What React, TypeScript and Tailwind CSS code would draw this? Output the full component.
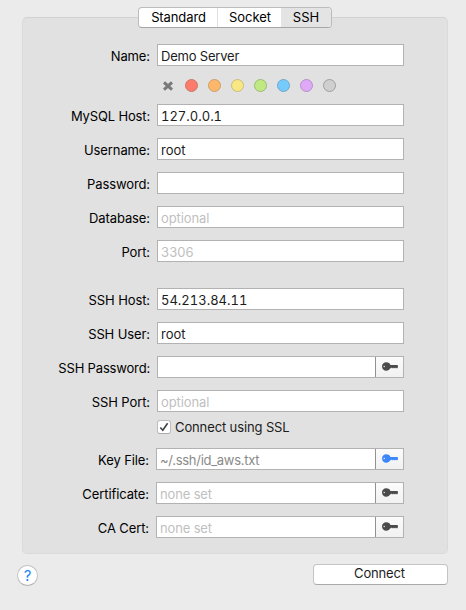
import React from "react";

const swatches = [
  "bg-[#fc7b6b] border-[#cf7367]",
  "bg-[#fdb76b] border-[#cf9d69]",
  "bg-[#f9e784] border-[#c9be7b]",
  "bg-[#c0e984] border-[#9bbb73]",
  "bg-[#76cbfd] border-[#6fa8cb]",
  "bg-[#e0a9f7] border-[#b58fc6]",
  "bg-[#cfcfcf] border-[#9f9f9f]",
];

function KeyIcon({ color }: { color: string }) {
  return (
    <svg width="16" height="9" viewBox="0 0 16 9" fill={color} className="mb-px shrink-0">
      <path
        fillRule="evenodd"
        d="M4.3 .3C6.4 .3 8 1.4 8.4 2.9H15.3L16 3.7V4.6L15.5 6.2H14.4L14 5.4L13.4 6.3H12.4L11.9 5.4L11.3 6.3H10.3L9.8 5.5L9.2 6.3H8.2C7.5 7.8 6.2 8.8 4.3 8.8C1.8 8.8 0 7 0 4.5C0 2 1.8 .3 4.3 .3ZM2.2 3.8A.7 .7 0 1 0 2.2 5.2A.7 .7 0 1 0 2.2 3.8Z"
      />
    </svg>
  );
}

type RowProps = {
  label: string;
  labelSpacing?: string;
  value?: string;
  spacing?: string;
  tone?: string;
  keyColor?: string;
  wide?: boolean;
};

function Row({
  label,
  labelSpacing = "tracking-[-0.1px]",
  value,
  spacing = "",
  tone = "text-[#1c1c1c]",
  keyColor,
  wide,
}: RowProps) {
  return (
    <div className="flex h-[22px] justify-end pr-[43px]">
      <label className={`pr-[7px] pt-px leading-[22px] text-black whitespace-nowrap ${labelSpacing}`}>{label}</label>
      <div className={`flex h-[22px] shrink-0 border border-[#b2b2b2] bg-white ${wide ? "w-[248px]" : "w-[247px]"}`}>
        <span className={`grow pl-[3px] leading-[23px] whitespace-nowrap ${tone} ${spacing}`}>{value}</span>
        {keyColor && (
          <button className="flex w-[28px] items-center justify-center border-l border-[#929292] bg-gradient-to-b from-[#fbfbfb] to-[#f1f1f1]">
            <KeyIcon color={keyColor} />
          </button>
        )}
      </div>
    </div>
  );
}

export default function App() {
  const hint = "text-[#bfbfbf]";
  return (
    <main className="h-[610px] w-[466px] overflow-hidden bg-[#ebebeb] pt-[7px] font-['Inter','Liberation_Sans',sans-serif] text-[13px]">
      <nav className="relative z-10 ml-[138px] flex h-[21px] w-[194px] overflow-hidden rounded-[4px] border border-[#bcbcbc] border-b-[#a6a6a6] bg-white text-center leading-[19px] text-black">
        <span className="w-[79px] border-r border-[#e0e0e0] pl-px tracking-[-0.1px]">Standard</span>
        <span className="w-[63px] pl-px">Socket</span>
        <span className="grow bg-[#e4e4e4]">SSH</span>
      </nav>
      <section className="-mt-[11px] ml-[22px] h-[537px] w-[426px] rounded-[5px] border border-[#dadada] border-t-[#d2d2d2] bg-[#e1e1e1] pt-[26px]">
        <Row label="Name:" value="Demo Server" spacing="tracking-[-0.2px]" />
        <div className="mt-[13px] mb-[12px] ml-[138px] flex h-[13px] items-center">
          <svg width="12" height="12" viewBox="0 0 12 12" className="mr-[11px] ml-px">
            <path d="M2 2.3L10 9.7M10 2.3L2 9.7" stroke="#797979" strokeWidth="3" />
          </svg>
          <div className="flex gap-[10px]">
            {swatches.map((s) => (
              <i key={s} className={`size-[13px] rounded-full border ${s}`} />
            ))}
          </div>
        </div>
        <div className="flex flex-col gap-[12px]">
          <Row label="MySQL Host:" labelSpacing="tracking-[-0.15px]" value="127.0.0.1" spacing="tabular-nums" />
          <Row label="Username:" value="root" />
          <Row label="Password:" value="" />
          <Row label="Database:" value="optional" tone={hint} spacing="tracking-[-0.1px]" />
          <Row label="Port:" value="3306" tone={hint} spacing="tracking-[0.1px]" />
        </div>
        <div className="mt-[26px] flex flex-col gap-[12px]">
          <Row label="SSH Host:" value="54.213.84.11" spacing="tabular-nums" />
          <Row label="SSH User:" value="root" />
          <Row label="SSH Password:" labelSpacing="tracking-[-0.17px]" keyColor="#4b4b4b" />
          <Row label="SSH Port:" value="optional" tone={hint} spacing="tracking-[-0.1px]" />
        </div>
        <div className="mt-[8px] mb-[14px] ml-[134px] flex h-[14px] items-center">
          <span className="flex size-[14px] items-center justify-center rounded-[3px] border border-[#bdbdbd] border-b-[#ababab] bg-white">
            <svg width="12" height="12" viewBox="0 0 12 12" fill="none" className="shrink-0">
              <path d="M2.3 6.5L4.8 9.3L9.6 2.2" stroke="#404040" strokeWidth="1.6" />
            </svg>
          </span>
          <span className="pl-[4px] leading-[14px] tracking-[-0.12px] text-[#1c1c1c]">Connect using SSL</span>
        </div>
        <div className="flex flex-col gap-[12px]">
          <Row label="Key File:" value="~/.ssh/id_aws.txt" tone="text-[#8a8a8a]" spacing="tracking-[-0.28px]" keyColor="#3b87fb" wide />
          <Row label="Certificate:" value="none set" tone={hint} spacing="tracking-[-0.15px]" keyColor="#4b4b4b" wide />
          <Row label="CA Cert:" value="none set" tone={hint} spacing="tracking-[-0.15px]" keyColor="#4b4b4b" wide />
        </div>
      </section>
      <footer className="flex justify-between pt-[10px] pr-[18px] pl-[17px]">
        <button className="mt-px size-[21px] rounded-full border border-[#c2c2c2] border-b-[#adadad] bg-white text-[15px] leading-[19px] text-[#1a86fb]">?</button>
        <button className="h-[21px] w-[135px] rounded-[4px] border border-[#c4c4c4] border-b-[#a9a9a9] bg-white pr-[2px] pb-[2px] leading-[17px] tracking-[-0.15px] text-[#1c1c1c]">Connect</button>
      </footer>
    </main>
  );
}
